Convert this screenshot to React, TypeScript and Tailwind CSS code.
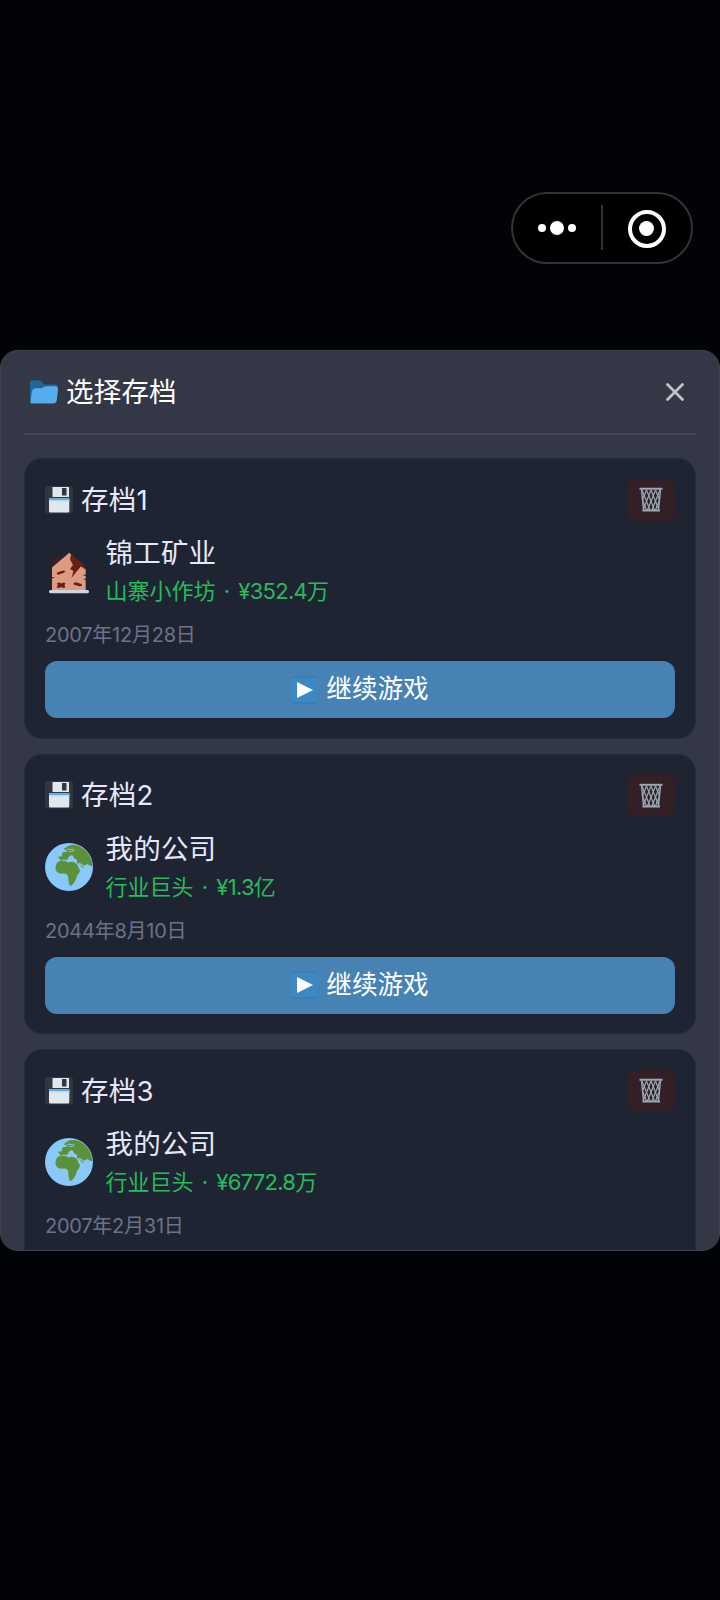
import type { ReactNode } from 'react';

type Save = {
  id: number;
  name: string;
  level: string;
  money: string;
  date: string;
  icon: 'house' | 'earth';
  canContinue?: boolean;
};

const saves: Save[] = [
  { id: 1, name: '锦工矿业', level: '山寨小作坊', money: '¥352.4万', date: '2007年12月28日', icon: 'house', canContinue: true },
  { id: 2, name: '我的公司', level: '行业巨头', money: '¥1.3亿', date: '2044年8月10日', icon: 'earth', canContinue: true },
  { id: 3, name: '我的公司', level: '行业巨头', money: '¥6772.8万', date: '2007年2月31日', icon: 'earth' },
];

function FolderIcon() {
  return (
    <svg width="28" height="24" viewBox="0 0 28 24">
      <path d="M0 2.500A2.200 2.200 0 0 1 2.200.3h6c3.500 0 4 4 7.500 4.200H25a3 3 0 0 1 2.800 3v8L2 22.500H0z" fill="#226699" />
      <path d="M.7 23.500c.3-4 .4-8 1.300-12 .5-2.300 1.500-3.300 4-3.300h5c2.500 0 3-2 5.500-2H25.500c2 0 2.700 1.300 2.400 3.300L26.800 20c-.3 2.500-1.500 3.500-3.800 3.500z" fill="#55acee" />
    </svg>
  );
}

function FloppyIcon() {
  return (
    <svg width="28" height="28" viewBox="0 0 28 28">
      <rect width="28" height="27.500" rx="3" fill="#31373d" />
      <path d="M7.500 1H24v10H7.500z" fill="#e1e8ed" />
      <rect x="17" y="2" width="4.500" height="7.500" fill="#31373d" />
      <path d="M4 12.300h20.300V25a1.500 1.500 0 0 1-1.500 1.500H5.500A1.500 1.500 0 0 1 4 25z" fill="#e1e8ed" />
      <path d="M4 12.300h20.300v1.800H4z" fill="#55acee" />
      <path d="M4 14.100h20.300v1.400H4z" fill="#b9d9f1" />
    </svg>
  );
}

function TrashIcon() {
  return (
    <svg width="24" height="25" viewBox="0 0 24 25" fill="none" stroke="#99aab5">
      <path d="M.5 1.800h23" strokeWidth="2" />
      <path d="M3.500 23.500h17.500" strokeWidth="2" />
      <path d="M2.500 2.500l2 20.500M21.500 2.500l-2 20.500" strokeWidth="1.400" />
      <path d="M3 3l8 20M7.500 3l8 20M12 3l7.500 19M16.500 3l4 10M3.500 13l4 10" strokeWidth="1.200" />
      <path d="M21 3l-8 20M16.500 3l-8 20M12 3L4.500 22M7.500 3l-4 10M20.500 13l-4 10" strokeWidth="1.200" />
    </svg>
  );
}

function HouseIcon() {
  return (
    <svg width="48" height="48" viewBox="0 0 48 48">
      <path d="M7.500 11l4.500-1.500 4 2-1 5-7 5z" fill="#3f1d20" />
      <path
        d="M24.300 5.700L7 20.500v9.500l3 .8-3 .8v12h33.700V33l-2.500-.7 2.500-.8V29l-3-.8 3-.7V22l-5-6-5.700-4.500z"
        fill="#dd9b82"
      />
      <path d="M26 7.500l5 4.500 4.700 2.500 5 7v1.200l-4.700-3.200-4 4.500-5.500 7 2-7-3.500-2 3-4-3-5.500z" fill="#662113" />
      <path d="M12.200 25.500l6-2 2 .5-1 1.800-6 2-1.500-.8zM28.500 36l2.500-.7 5.500 1.700.5 2-2.500.2-5.500-1.500z" fill="#662113" />
      <path d="M12 36l2.500-.5 1.500 1 2-1 2.500.5-1 2.200 1 2-2.500.8-2-1-2 1-2.500-.8 1.300-2z" fill="#662113" />
      <rect x="4" y="43" width="40" height="3.300" rx="1.500" fill="#ccd6dd" />
    </svg>
  );
}

function EarthIcon() {
  return (
    <svg width="48" height="48" viewBox="0 0 48 48">
      <circle cx="24" cy="24" r="24" fill="#88c9f9" />
      <path
        d="M21 4.500c2-2 5-2.500 7.500-2.500 2 0 4 .3 6 1.300A24 24 0 0 1 47.500 23c-1.500.5-2.500-.5-3.500-1-2-.8-4 .5-5 2-1.500 1.500-3-.5-4-2-.8-1.200-2.500-1-3-2.500-.3-1.200.5-2-.5-3-1.200-1-2-.5-2.500-1.500-.7-1-.5-2-1.500-2.500-1.500-.5-2.500.5-3.500 1.500s-1 2.500-2.500 3-2.500-1-3.500-.5-1 1.500-2.500 1c-.8-.5-.5-2-1.500-2.200-.8-.3-1-1-.5-1.500 1-.8 2.500.2 3.200-.8.8-1 0-2.500 1-3.500 1.200-1 2.500 0 3.500-.8s.5-2.200-1-2c-.8.2-1.300-.2-1-1z"
        fill="#5c913b"
      />
      <path d="M22 6.500c2-1 3.500.5 5.500 0s2 1 .5 1.700-3.500 0-4.500.5" fill="none" stroke="#88c9f9" strokeWidth="1" />
      <path
        d="M34 20.500c1.500 0 2.500 1.500 4 2.500s3-1.500 4.500-1 1.500 2 2 3.500"
        fill="none"
        stroke="#88c9f9"
        strokeWidth="1.300"
      />
      <path
        d="M13.500 18.500c2-.8 4.500-.8 7-.5 1.500.2 1.500 1.500 3 1.500s2.500-1 4.500-.5 3.500 1 4.500 3 1 4 2.500 5c0 2.500-2 4-3 6-.8 2-1 4-2.500 6-1 1.800-2.500 3.500-4 4-1.500-.5-1.500-3-2-5s.3-3.500-.5-5-1.500-2.500-3.500-2.500c-2.500 0-4 .5-6-.5s-3.500-3.500-3-6 1.200-4.500 3-5.500z"
        fill="#5c913b"
      />
    </svg>
  );
}

function PlayIcon() {
  return (
    <svg width="27" height="28" viewBox="0 0 27 28">
      <rect y=".5" width="27" height="27" rx="3" fill="#3279b0" />
      <rect y="1.500" width="27" height="25" rx="3" fill="#3b88c3" />
      <path d="M6 6l16 8-16 8z" fill="#fff" />
    </svg>
  );
}

function Title({ children }: { children: ReactNode }) {
  return <span className="pt-[2px] text-[27.5px] tracking-[0.2px] whitespace-nowrap">{children}</span>;
}

function SaveCard({ save }: { save: Save }) {
  return (
    <div className="h-[280.5px] shrink-0 rounded-[18px] border border-[#262b39] bg-[#1f2432] px-5 pt-5">
      <div className="flex h-[41px] items-center justify-between text-[#e6e8fa]">
        <div className="flex items-center gap-2">
          <FloppyIcon />
          <Title>存档{save.id}</Title>
        </div>
        <button className="flex h-[42px] w-12 items-center justify-center rounded-[8px] bg-[#331f26]">
          <TrashIcon />
        </button>
      </div>

      <div className="mt-[13px] flex items-center gap-[12.5px]">
        {save.icon === 'house' ? <HouseIcon /> : <EarthIcon />}
        <div>
          <div className="h-[38px] leading-[41px] text-[#e6e8fa]">
            <Title>{save.name}</Title>
          </div>
          <div className="h-[38px] text-[22px] leading-[41px] [word-spacing:2px] whitespace-pre text-[#27bb5d]">
            {save.level} · <span className="tracking-[-0.7px]">{save.money}</span>
          </div>
        </div>
      </div>

      <div className="mt-3 h-[26px] text-[20px] leading-[28px] tracking-[-0.25px] text-[#6d728a]">{save.date}</div>

      {save.canContinue && (
        <button className="mt-[14px] flex h-[57px] w-full items-center justify-center gap-2 rounded-xl bg-[#4682b4] text-[25.6px] text-white">
          <PlayIcon />
          <span>继续游戏</span>
        </button>
      )}
    </div>
  );
}

export default function App() {
  return (
    <div className="flex h-[1600px] w-[720px] flex-col overflow-hidden bg-[#020307] font-[Inter,'Noto_Sans_CJK_SC',sans-serif]">
      {/* 小程序胶囊按钮 */}
      <div className="mt-[192px] mr-[27px] flex h-[72px] w-[182px] shrink-0 items-center self-end rounded-full border-2 border-[#333436] bg-black">
        <div className="flex w-[88px] items-center justify-center gap-1 pr-px">
          <i className="size-2 rounded-full bg-white" />
          <i className="size-[14px] rounded-full bg-white" />
          <i className="size-2 rounded-full bg-white" />
        </div>
        <div className="mb-px h-[45px] w-[2px] bg-[#333436]" />
        <div className="flex flex-1 items-center justify-center pt-px pr-px">
          <div className="flex size-[38px] items-center justify-center rounded-full border-4 border-white">
            <i className="size-[15px] rounded-full bg-white" />
          </div>
        </div>
      </div>

      {/* 存档弹窗 */}
      <div className="mt-[86px] flex h-[901px] shrink-0 flex-col overflow-hidden rounded-[18px] border border-[#3f434f] bg-[#333746] px-[23px]">
        <div className="flex h-[84px] shrink-0 items-center justify-between border-b-2 border-[#434753] pr-3 pl-[6px] text-white">
          <div className="flex items-center gap-2">
            <FolderIcon />
            <Title>选择存档</Title>
          </div>
          <svg width="18" height="18" viewBox="0 0 18 18" stroke="#c2c3c8" strokeWidth="2.800" strokeLinecap="round">
            <path d="M1.500 1.500l15 15M16.500 1.500l-15 15" />
          </svg>
        </div>

        <div className="mt-[23px] flex flex-col gap-[15px]">
          {saves.map((save) => (
            <SaveCard key={save.id} save={save} />
          ))}
        </div>
      </div>
    </div>
  );
}
